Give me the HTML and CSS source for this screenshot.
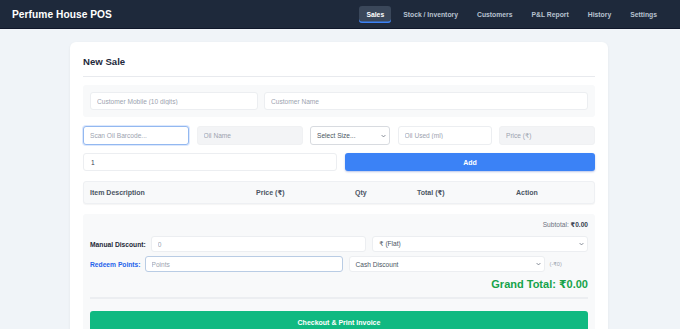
FILE: index.html
```html
<!DOCTYPE html>
<html lang="en">
<head>
<meta charset="utf-8">
<title>Perfume House POS</title>
<link rel="stylesheet" href="styles.css">
</head>
<body>
<header class="topbar">
  <div class="brand">Perfume House POS</div>
  <nav class="nav">
    <a class="nav-item active">Sales</a>
    <a class="nav-item">Stock / Inventory</a>
    <a class="nav-item">Customers</a>
    <a class="nav-item">P&amp;L Report</a>
    <a class="nav-item">History</a>
    <a class="nav-item">Settings</a>
  </nav>
</header>
<main class="page">
  <section class="card">
    <h2 class="card-title">New Sale</h2>

    <div class="customer-box">
      <input class="field" type="text" placeholder="Customer Mobile (10 digits)">
      <input class="field" type="text" placeholder="Customer Name">
    </div>

    <div class="item-row">
      <input class="field focus" type="text" placeholder="Scan Oil Barcode...">
      <input class="field readonly" type="text" placeholder="Oil Name">
      <div class="select-wrap">
        <div class="field select select-strong">Select Size...</div>
        <svg class="chev" viewBox="0 0 8 5" width="5" height="4"><path d="M1 1l3 3 3-3" fill="none" stroke="#6b7280" stroke-width="1.3"/></svg>
      </div>
      <input class="field" type="text" placeholder="Oil Used (ml)">
      <input class="field readonly" type="text" placeholder="Price (₹)">
    </div>

    <div class="qty-row">
      <input class="field qty" type="text" value="1">
      <button class="btn btn-blue">Add</button>
    </div>

    <div class="table-head">
      <div class="th">Item Description</div>
      <div class="th">Price (₹)</div>
      <div class="th">Qty</div>
      <div class="th">Total (₹)</div>
      <div class="th">Action</div>
    </div>

    <div class="summary">
      <div class="subtotal">Subtotal: <b>₹0.00</b></div>

      <div class="disc-row">
        <label class="lbl">Manual Discount:</label>
        <input class="field small" type="text" placeholder="0">
        <div class="select-wrap">
          <div class="field small select">₹ (Flat)</div>
          <svg class="chev" viewBox="0 0 8 5" width="5" height="4"><path d="M1 1l3 3 3-3" fill="none" stroke="#6b7280" stroke-width="1.3"/></svg>
        </div>
      </div>

      <div class="redeem-row">
        <label class="lbl lbl-blue">Redeem Points:</label>
        <input class="field small points" type="text" placeholder="Points">
        <div class="select-wrap cash">
          <div class="field small select">Cash Discount</div>
          <svg class="chev" viewBox="0 0 8 5" width="5" height="4"><path d="M1 1l3 3 3-3" fill="none" stroke="#6b7280" stroke-width="1.3"/></svg>
        </div>
        <span class="note">(-₹0)</span>
      </div>

      <div class="grand">Grand Total: ₹0.00</div>
      <div class="divider"></div>
      <button class="btn btn-green">Checkout &amp; Print Invoice</button>
    </div>
  </section>
</main>
</body>
</html>
```

FILE: styles.css
```css
* { box-sizing: border-box; }

html, body {
  margin: 0;
  height: 100%;
  overflow: hidden;
}

body {
  background: #f0f4f8;
  font-family: "Liberation Sans", Arial, "DejaVu Sans", sans-serif;
  color: #1f2937;
}

.topbar {
  height: 29px;
  background: #1e293b;
  border-bottom: 1px solid #0f172a;
  display: flex;
  align-items: center;
  justify-content: space-between;
  padding: 0 16px 0 12px;
}

.brand {
  color: #ffffff;
  font-weight: 700;
  font-size: 10.2px;
  letter-spacing: 0.05px;
}

.nav {
  display: flex;
  gap: 5px;
  align-items: center;
}

.nav-item {
  display: block;
  height: 17px;
  line-height: 17px;
  padding: 0 7px;
  font-size: 6.8px;
  font-weight: 700;
  color: #b8c2d0;
  border-radius: 3px;
}

.nav-item.active {
  background: #3a475a;
  color: #ffffff;
  box-shadow: inset 0 -1.5px 0 #3b82f6;
}

.page {
  padding: 13px 2px 0 0;
}

.card {
  width: 538px;
  margin: 0 auto;
  background: #ffffff;
  border-radius: 6px;
  padding: 13px;
  box-shadow: 0 1px 3px rgba(15, 23, 42, 0.06);
}

.card-title {
  margin: 0;
  font-size: 9.6px;
  line-height: 14px;
  font-weight: 700;
  color: #1e293b;
  padding-bottom: 7px;
  border-bottom: 1px solid #e8eaee;
}

.field {
  display: block;
  width: 100%;
  height: 18px;
  margin: 0;
  border: 1px solid #eceef1;
  border-radius: 3px;
  background: #ffffff;
  padding: 0 6px;
  font-family: "Liberation Sans", Arial, "DejaVu Sans", sans-serif;
  font-size: 6.6px;
  color: #374151;
  outline: none;
}

.field::placeholder { color: #9ca3af; }

.customer-box {
  margin-top: 8px;
  background: #f8f9fa;
  border-radius: 3px;
  padding: 7px;
  display: grid;
  grid-template-columns: 168px 1fr;
  gap: 6px;
}

.item-row {
  margin-top: 9px;
  display: grid;
  grid-template-columns: 106px 106px 80px 94px 1fr;
  column-gap: 7.5px;
}

.item-row .field { height: 19px; }

.field.focus {
  border-color: #93b8f0;
  box-shadow: 0 0 0 1px rgba(59, 130, 246, 0.18);
}

.field.readonly {
  background: #f3f4f6;
  border-color: #f0f1f3;
}

.select-wrap {
  position: relative;
}

.select {
  display: flex;
  align-items: center;
  color: #4b5563;
}

.select-strong {
  border-color: #d8dbe0;
}

.chev {
  position: absolute;
  right: 4px;
  top: 50%;
  transform: translateY(-50%);
}

.qty-row {
  margin-top: 8px;
  display: grid;
  grid-template-columns: 254px 1fr;
  gap: 8px;
}

.qty { padding-left: 7px; color: #374151; }

.btn {
  display: block;
  width: 100%;
  border: none;
  border-radius: 3px;
  color: #ffffff;
  font-family: "Liberation Sans", Arial, "DejaVu Sans", sans-serif;
  font-weight: 700;
  font-size: 7px;
  padding: 0;
}

.btn-blue {
  height: 18px;
  background: #3b82f6;
  box-shadow: 0 1px 2px rgba(30, 64, 175, 0.3);
}

.table-head {
  margin-top: 10px;
  height: 23px;
  display: grid;
  grid-template-columns: 166px 99px 62px 99px 1fr;
  align-items: center;
  background: #f8f9fa;
  border: 1px solid #eef0f3;
  border-radius: 3px;
  box-shadow: 0 1px 1px rgba(0, 0, 0, 0.04);
}

.th {
  padding-left: 6px;
  font-size: 7px;
  font-weight: 700;
  color: #4b5563;
}

.summary {
  margin-top: 10px;
  background: #f8f9fa;
  border-radius: 3px;
  padding: 7px 7px 0;
}

.subtotal {
  text-align: right;
  font-size: 6.6px;
  line-height: 8px;
  color: #6b7280;
}

.subtotal b { color: #374151; }

.disc-row {
  margin-top: 7px;
  display: grid;
  grid-template-columns: auto 1fr 1fr;
  column-gap: 6px;
  align-items: center;
}

.disc-row .lbl { margin-right: -1px; }

.small { height: 16px; }

.lbl {
  font-size: 6.7px;
  font-weight: 700;
  color: #1f2937;
  white-space: nowrap;
}

.lbl-blue { color: #2563eb; }

.redeem-row {
  margin-top: 4px;
  display: flex;
  align-items: center;
}

.redeem-row .points {
  width: 198px;
  margin-left: 4px;
  border-color: #b9cce4;
}

.redeem-row .cash {
  width: 196px;
  margin-left: 6px;
}

.note {
  margin-left: 5px;
  font-size: 5.6px;
  color: #9ca3af;
}

.grand {
  margin-top: 6px;
  text-align: right;
  font-size: 11px;
  line-height: 13px;
  font-weight: 700;
  color: #16a34a;
}

.divider {
  margin-top: 6px;
  height: 2px;
  background: #eceef1;
}

.btn-green {
  margin-top: 12px;
  height: 22px;
  background: #10b981;
}
```
